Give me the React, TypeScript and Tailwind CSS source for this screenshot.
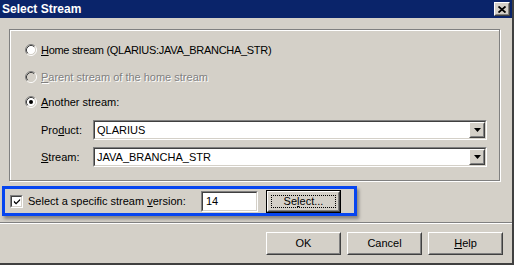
import React from 'react';

const face = 'bg-[#d4d0c8]';

const Radio = ({ checked, disabled }: { checked?: boolean; disabled?: boolean }) => (
  <svg width="12" height="12" viewBox="0 0 12 12" className="shrink-0">
    <circle cx="6" cy="6" r="4.5" fill={disabled ? '#d4d0c8' : '#fff'} />
    <path d="M2.11 9.89 A5.5 5.5 0 0 1 9.89 2.11" stroke="#808080" fill="none" />
    <path d="M9.89 2.11 A5.5 5.5 0 0 1 2.11 9.89" stroke="#fff" fill="none" />
    <path d="M2.82 9.18 A4.5 4.5 0 0 1 9.18 2.82" stroke="#404040" fill="none" />
    <path d="M9.18 2.82 A4.5 4.5 0 0 1 2.82 9.18" stroke="#d4d0c8" fill="none" />
    {checked && <circle cx="6" cy="6" r="2" fill="#000" />}
  </svg>
);

const Sunken = ({ className, children }: { className?: string; children?: React.ReactNode }) => (
  <div className={`border border-t-[#808080] border-l-[#808080] border-b-white border-r-white ${className ?? ''}`}>
    <div className="h-full w-full border border-t-[#404040] border-l-[#404040] border-b-[#d4d0c8] border-r-[#d4d0c8] bg-white flex items-center">
      {children}
    </div>
  </div>
);

const Raised = ({ className, children }: { className?: string; children?: React.ReactNode }) => (
  <div className={`border border-t-white border-l-white border-b-[#404040] border-r-[#404040] ${face} ${className ?? ''}`}>
    <div className="h-full w-full border border-t-[#d4d0c8] border-l-[#d4d0c8] border-b-[#808080] border-r-[#808080] flex items-center justify-center">
      {children}
    </div>
  </div>
);

const Combo = ({ value }: { value: string }) => (
  <Sunken className="w-[394px] h-[20px]">
    <span className="flex-1 pl-[2px] pt-[1px]">{value}</span>
    <Raised className="w-[16px] h-[16px]">
      <svg width="7" height="4" viewBox="0 0 7 4">
        <path d="M0 0 H7 L3.5 4 Z" fill="#000" />
      </svg>
    </Raised>
  </Sunken>
);

const Button = ({ children }: { children: React.ReactNode }) => (
  <Raised className="w-[75px] h-[23px]">
    <span>{children}</span>
  </Raised>
);

export default function App() {
  return (
    <div className={`w-[514px] h-[265px] ${face} font-['Liberation_Sans',Arial,sans-serif] text-[11px] text-black leading-none border-r-2 border-b-2 border-r-[#404040] border-b-[#404040] flex flex-col overflow-hidden`}>
      {/* title bar */}
      <div className="h-[18px] bg-[#0a246a] flex items-center justify-between pl-[2px] pr-[2px]">
        <span className="text-white font-bold text-[12px]">Select Stream</span>
        <Raised className="w-[16px] h-[14px]">
          <svg width="8" height="7" viewBox="0 0 8 7">
            <path d="M0.5 0.5 L7.5 6.5 M7.5 0.5 L0.5 6.5" stroke="#000" strokeWidth="1.8" />
          </svg>
        </Raised>
      </div>

      {/* group panel */}
      <div className="mt-[11px] ml-[9px] w-[491px] h-[152px] border border-[#808080] shadow-[inset_1px_1px_0_#fff,1px_1px_0_#fff] pt-[13px] flex flex-col">
        <div className="h-[14px] flex items-center pl-[15px] gap-[4px]">
          <Radio />
          <span className="tracking-[-0.3px]"><span className="underline">H</span>ome stream (QLARIUS:JAVA_BRANCHA_STR)</span>
        </div>
        <div className="h-[14px] mt-[13px] flex items-center pl-[15px] gap-[4px]">
          <Radio disabled />
          <span className="text-[#808080] [text-shadow:1px_1px_0_#fff]"><span className="underline">P</span>arent stream of the home stream</span>
        </div>
        <div className="h-[14px] mt-[11px] flex items-center pl-[15px] gap-[4px]">
          <Radio checked />
          <span><span className="underline">A</span>nother stream:</span>
        </div>
        <div className="mt-[11px] flex items-center pl-[31px]">
          <span className="w-[52px]">Pro<span className="underline">d</span>uct:</span>
          <Combo value="QLARIUS" />
        </div>
        <div className="mt-[7px] flex items-center pl-[31px]">
          <span className="w-[52px]"><span className="underline">S</span>tream:</span>
          <Combo value="JAVA_BRANCHA_STR" />
        </div>
      </div>

      {/* highlighted version row */}
      <div className="mt-[5px] ml-[2px] w-[355px] h-[30px] border-[3px] border-[#0645f0] shadow-[2px_3px_3px_rgba(0,0,0,0.35)] flex items-center pl-[5px]">
        <Sunken className="w-[13px] h-[13px]">
          <svg width="9" height="9" viewBox="0 0 9 9" className="ml-[1px]">
            <path d="M1 3.5 L3.5 6 L8 1.5 L8 3.5 L3.5 8 L1 5.5 Z" fill="#000" />
          </svg>
        </Sunken>
        <span className="ml-[5px] w-[173px]">Select a specific stream <span className="underline">v</span>ersion:</span>
        <Sunken className="w-[57px] h-[21px]">
          <span className="pl-[3px]">14</span>
        </Sunken>
        <div className="ml-[8px] w-[75px] h-[23px] border border-black">
          <Raised className="w-full h-full">
            <div className="m-[2px] flex-1 self-stretch border border-dotted border-black flex items-center justify-center">
              <span>Se<span className="underline">l</span>ect...</span>
            </div>
          </Raised>
        </div>
      </div>

      {/* separator */}
      <div className="mt-[6px] h-[2px] border-t border-t-[#808080] border-b border-b-white" />

      {/* buttons */}
      <div className="mt-[8px] flex justify-end gap-[6px] pr-[9px]">
        <Button>OK</Button>
        <Button>Cancel</Button>
        <Button><span className="underline">H</span>elp</Button>
      </div>
    </div>
  );
}
